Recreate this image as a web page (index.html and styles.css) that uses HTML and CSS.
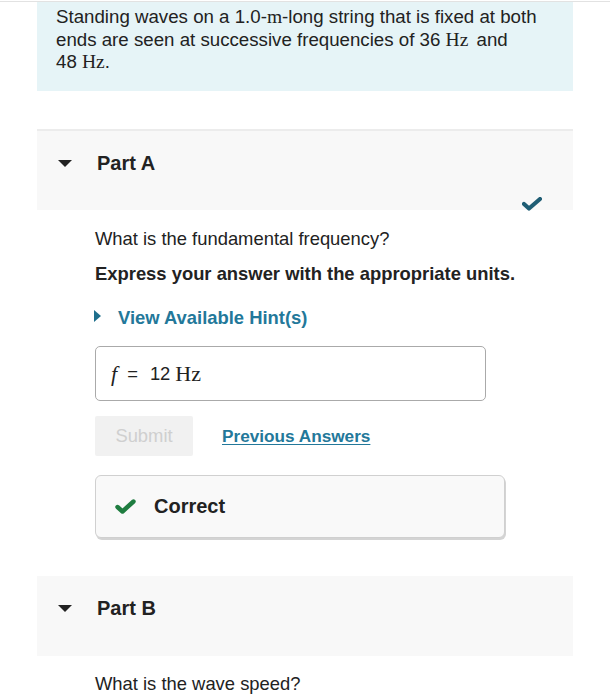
FILE: index.html
```html
<!DOCTYPE html>
<html>
<head>
<meta charset="utf-8">
<link rel="stylesheet" href="styles.css">
</head>
<body>
<div class="topline"></div>
<div class="page">
  <div class="intro">
    Standing waves on a 1.0-<span class="m">m</span>-long string that is fixed at both ends are seen at successive frequencies of 36 <span class="m unit-gap">Hz</span> and <span class="nowrap">48 <span class="m">Hz</span>.</span>
  </div>

  <section class="part part-a">
    <div class="part-head">
      <span class="tri-down"></span>
      <h2 class="part-title">Part A</h2>
      <svg class="done" width="20" height="14" viewBox="0 0 20 14"><path d="M2 7 L7 11.5 L18 2" fill="none" stroke="#1f5d74" stroke-width="4.2" stroke-linecap="round" stroke-linejoin="round"/></svg>
    </div>
    <div class="part-body">
      <p class="question">What is the fundamental frequency?</p>
      <p class="instr">Express your answer with the appropriate units.</p>
      <div class="hint"><span class="tri-right"></span><span class="hint-text">View Available Hint(s)</span></div>
      <div class="answer"><span class="var">f</span><span class="eq">=</span><span class="num">12</span><span class="unit">Hz</span></div>
      <div class="actions">
        <button class="submit">Submit</button>
        <a class="prev" href="#">Previous Answers</a>
      </div>
      <div class="correct">
        <svg width="21" height="16" viewBox="0 0 21 16"><path d="M2.5 8 L7.5 12.5 L18.5 2.5" fill="none" stroke="#1f7d40" stroke-width="4.4" stroke-linecap="round" stroke-linejoin="round"/></svg>
        <span class="correct-text">Correct</span>
      </div>
    </div>
  </section>

  <section class="part part-b">
    <div class="part-head">
      <span class="tri-down"></span>
      <h2 class="part-title">Part B</h2>
    </div>
    <div class="part-body">
      <p class="question">What is the wave speed?</p>
    </div>
  </section>
</div>
</body>
</html>
```

FILE: styles.css
```css
html, body {
  margin: 0;
  padding: 0;
  background: #fff;
}
body {
  font-family: "Liberation Sans", Arial, sans-serif;
  color: #222;
  overflow: hidden;
}
.topline {
  margin-top: 1px;
  height: 1px;
  background: #e2e2e2;
}
.page {
  width: 536px;
  margin-left: 37px;
}
.intro {
  background: #e6f4f7;
  box-sizing: border-box;
  height: 89px;
  padding: 4px 19px 0 19px;
  font-size: 18.7px;
  line-height: 22.5px;
  color: #222;
}
.m {
  font-family: "Liberation Serif", "Times New Roman", serif;
  font-size: 19.5px;
  line-height: 1;
}
.unit-gap {
  margin-right: 3px;
}
.nowrap {
  white-space: nowrap;
}
.part-a {
  margin-top: 38px;
  border-top: 2px solid #ececec;
}
.part-head {
  background: #f8f8f8;
  height: 79px;
  display: flex;
  align-items: flex-start;
  position: relative;
}
.part-b .part-head {
  height: 80px;
}
.tri-down {
  width: 0;
  height: 0;
  border-left: 7px solid transparent;
  border-right: 7px solid transparent;
  border-top: 7px solid #222;
  margin: 29px 0 0 21px;
}
.part-title {
  margin: 20px 0 0 25px;
  font-size: 20px;
  font-weight: bold;
  line-height: 24px;
  color: #222;
}
.done {
  position: absolute;
  right: 31px;
  top: 66px;
}
.part-body {
  padding-left: 58px;
}
.question {
  margin: 0;
  padding-top: 17px;
  font-size: 18.4px;
  line-height: 24px;
}
.instr {
  margin: 11px 0 0 0;
  font-size: 18.4px;
  font-weight: bold;
  line-height: 24px;
}
.hint {
  margin-top: 20px;
  display: flex;
  align-items: center;
  height: 24px;
}
.tri-right {
  width: 0;
  height: 0;
  border-top: 6px solid transparent;
  border-bottom: 6px solid transparent;
  border-left: 7px solid #1f6f8c;
  margin-left: -1px;
  margin-top: -4px;
}
.hint-text {
  margin-left: 17px;
  font-size: 18.4px;
  font-weight: bold;
  color: #23789a;
}
.answer {
  margin-top: 16px;
  height: 53px;
  border: 1px solid #aaa;
  border-radius: 5px;
  display: flex;
  align-items: center;
  padding-left: 15px;
  box-sizing: content-box;
  width: 374px;
}
.var {
  font-family: "Liberation Serif", serif;
  font-style: italic;
  font-size: 22px;
}
.eq {
  font-size: 18.4px;
  margin-left: 10px;
}
.num {
  font-size: 18.4px;
  margin-left: 12px;
}
.unit {
  font-family: "Liberation Serif", serif;
  font-size: 22px;
  margin-left: 5px;
}
.actions {
  margin-top: 15px;
  display: flex;
  align-items: center;
}
.submit {
  width: 98px;
  height: 40px;
  border: none;
  border-radius: 2px;
  background: #f1f1f1;
  color: #cfcfcf;
  font-family: "Liberation Sans", Arial, sans-serif;
  font-size: 18.4px;
  padding: 0;
}
.prev {
  margin-left: 29px;
  font-size: 17.2px;
  font-weight: bold;
  color: #23789a;
  text-decoration: underline;
  text-underline-offset: 2px;
}
.correct {
  margin-top: 19px;
  border: 1px solid #d0d0d0;
  border-radius: 6px;
  background: #f9f9f9;
  box-shadow: 1px 2px 0 #d4d4d4;
  display: flex;
  align-items: center;
  padding-left: 19px;
  box-sizing: border-box;
  width: 410px;
  height: 63px;
}
.correct svg {
  flex: none;
}
.correct-text {
  margin-left: 18px;
  font-size: 20px;
  font-weight: bold;
  color: #222;
}
.part-b {
  margin-top: 38px;
}
.part-b .question {
  padding-top: 16px;
}
```
